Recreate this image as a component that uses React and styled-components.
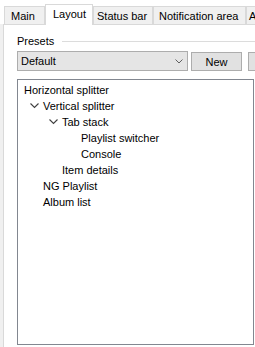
import React from 'react';
import styled, { createGlobalStyle } from 'styled-components';

const GlobalStyle = createGlobalStyle`
  html, body {
    margin: 0;
    padding: 0;
    background: #ffffff;
  }
  body {
    font-family: "Liberation Sans", Arial, sans-serif;
    font-size: 11px;
    color: #000;
  }
`;

const Window = styled.div`
  width: 255px;
  height: 347px;
  overflow: hidden;
  background: #ffffff;
  display: flex;
  flex-direction: column;
`;

const TabRow = styled.div`
  height: 24px;
  display: flex;
  align-items: flex-end;
  padding-left: 4px;
  white-space: nowrap;
`;

const Tab = styled.div`
  height: ${p => (p.$active ? 21 : 18)}px;
  width: ${p => p.$w}px;
  flex-shrink: 0;
  box-sizing: border-box;
  display: flex;
  align-items: center;
  padding-left: ${p => p.$pad}px;
  padding-bottom: ${p => (p.$active ? 2 : 0)}px;
  background: ${p => (p.$active ? '#ffffff' : '#f0f0f0')};
  border: 1px solid #d9d9d9;
  border-bottom: none;
  position: relative;
  z-index: ${p => (p.$active ? 1 : 0)};
  margin-bottom: ${p => (p.$active ? '-1px' : '0')};
`;

const Page = styled.div`
  flex: 1;
  display: flex;
  background: #f0f0f0;
  padding-left: 3px;
`;

const PageBody = styled.div`
  flex: 1;
  background: #ffffff;
  border-top: 1px solid #d9d9d9;
  border-left: 1px solid #d9d9d9;
  padding: 8px 0 0 13px;
  display: flex;
  flex-direction: column;
`;

const GroupTitle = styled.div`
  display: flex;
  align-items: center;
  gap: 8px;
  height: 16px;
  &::after {
    content: '';
    flex: 1;
    height: 1px;
    background: #dcdcdc;
    margin-top: 1px;
  }
`;

const PresetRow = styled.div`
  display: flex;
  gap: 3px;
  margin-top: 2px;
  white-space: nowrap;
`;

const Combo = styled.div`
  width: 171px;
  height: 20px;
  box-sizing: border-box;
  border: 1px solid #adadad;
  background: #e5e5e5;
  display: flex;
  align-items: center;
  justify-content: space-between;
  padding: 0 4px 0 3px;
  flex-shrink: 0;
`;

const Button = styled.div`
  width: ${p => p.$w}px;
  height: 19px;
  margin-top: 1px;
  margin-left: ${p => p.$gap || 0}px;
  box-sizing: border-box;
  border: 1px solid #adadad;
  background: #e1e1e1;
  display: flex;
  align-items: center;
  justify-content: center;
  flex-shrink: 0;
`;

const TreeBox = styled.div`
  margin-top: 8px;
  width: 237px;
  height: 266px;
  box-sizing: border-box;
  border: 1px solid #828790;
  background: #ffffff;
  padding-top: 2px;
`;

const TreeRow = styled.div`
  height: 16px;
  display: flex;
  align-items: center;
  padding-left: ${p => 6 + p.$level * 19}px;
  position: relative;
  white-space: nowrap;
`;

const Expander = styled.svg`
  position: absolute;
  left: ${p => p.$level * 19 - 7}px;
  top: 5px;
`;

const Chevron = ({ level }) => (
  <Expander $level={level} width="9" height="6" viewBox="0 0 9 6">
    <path d="M0.5 0.5 L4.5 4.5 L8.5 0.5" fill="none" stroke="#404040" strokeWidth="1.1" />
  </Expander>
);

const tabs = [
  { label: 'Main', w: 41, pad: 6 },
  { label: 'Layout', w: 48, pad: 7, active: true },
  { label: 'Status bar', w: 60, pad: 3 },
  { label: 'Notification area', w: 93, pad: 5 },
  { label: 'Album list', w: 70, pad: 2 },
];

const tree = [
  { label: 'Horizontal splitter', level: 0 },
  { label: 'Vertical splitter', level: 1, open: true },
  { label: 'Tab stack', level: 2, open: true },
  { label: 'Playlist switcher', level: 3 },
  { label: 'Console', level: 3 },
  { label: 'Item details', level: 2 },
  { label: 'NG Playlist', level: 1 },
  { label: 'Album list', level: 1 },
];

const App = () => {
  return (
    <Window>
      <GlobalStyle />
      <TabRow>
        {tabs.map(t => (
          <Tab key={t.label} $w={t.w} $pad={t.pad} $active={t.active}>
            {t.label}
          </Tab>
        ))}
      </TabRow>
      <Page>
        <PageBody>
          <GroupTitle>Presets</GroupTitle>
          <PresetRow>
            <Combo>
              <span>Default</span>
              <svg width="8" height="5" viewBox="0 0 8 5">
                <path d="M0.5 0.5 L4 4 L7.5 0.5" fill="none" stroke="#606060" strokeWidth="1" />
              </svg>
            </Combo>
            <Button $w={51}>New</Button>
            <Button $w={51} $gap={3}>Delete</Button>
          </PresetRow>
          <TreeBox>
            {tree.map(n => (
              <TreeRow key={n.label} $level={n.level}>
                {n.open && <Chevron level={n.level} />}
                {n.label}
              </TreeRow>
            ))}
          </TreeBox>
        </PageBody>
      </Page>
    </Window>
  );
};

export default App;
